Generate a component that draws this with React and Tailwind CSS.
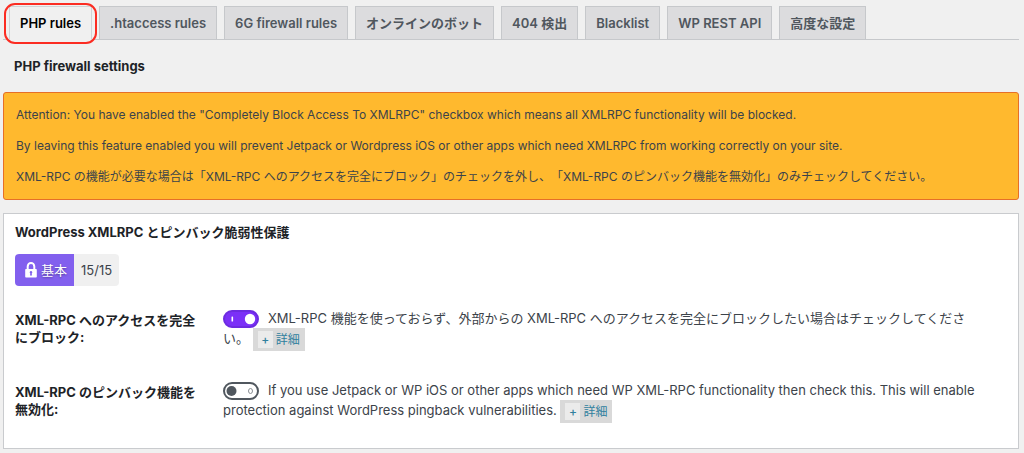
const TABS = [
  'PHP rules',
  '.htaccess rules',
  '6G firewall rules',
  'オンラインのボット',
  '404 検出',
  'Blacklist',
  'WP REST API',
  '高度な設定',
];

function Tab({ label, active }) {
  return (
    <a
      href="#"
      aria-current={active ? 'page' : undefined}
      className={
        'relative -mb-px block whitespace-nowrap border px-[10px] py-[6px] text-[13px] leading-5 font-semibold ' +
        (active
          ? 'border-[#d0d2d5] border-b-[#f0f0f0] bg-[#f0f0f0] text-black'
          : 'border-[#c6c8cb] bg-[#dcdcde] text-[#50575e]')
      }
    >
      {label}
      {active && (
        <span className="pointer-events-none absolute -inset-x-[6px] -top-1 -bottom-[5px] rounded-[11px] border-2 border-[#fb2c22]" />
      )}
    </a>
  );
}

function Toggle({ id, defaultChecked }) {
  return (
    <span className="relative mr-[9px] inline-block h-[18px] w-[36px] align-middle">
      <input
        id={id}
        type="checkbox"
        role="switch"
        defaultChecked={defaultChecked}
        className="peer absolute inset-0 m-0 appearance-none rounded-full border-2 border-[#50575e] bg-white checked:border-[#6c2be0] checked:bg-[#7b30f7]"
      />
      <svg viewBox="0 0 36 18" className="pointer-events-none absolute inset-0 h-full w-full peer-checked:hidden" aria-hidden="true">
        <circle cx="8.5" cy="9" r="5" fill="#50575e" />
        <ellipse cx="27.5" cy="9" rx="2" ry="2.5" fill="none" stroke="#8a8f94" />
      </svg>
      <svg viewBox="0 0 36 18" className="pointer-events-none absolute inset-0 hidden h-full w-full peer-checked:block" aria-hidden="true">
        <circle cx="27" cy="9" r="5.2" fill="#fff" />
        <rect x="8.5" y="6.5" width="1.6" height="5" rx="0.6" fill="#fff" />
      </svg>
    </span>
  );
}

function MoreInfo() {
  return (
    <button
      type="button"
      className="inline-flex h-[23px] items-center gap-[3px] bg-[#d9d9d9] px-[5px] align-middle text-[12px] leading-4 text-[#2f7f9e]"
    >
      <span className="flex h-[17px] w-[15px] items-center justify-center bg-[#ebebeb] font-medium text-[#2f7f9e]">+</span>
      詳細
    </button>
  );
}

function SettingRow({ id, label, checked, children }) {
  return (
    <tr className="align-top">
      <th scope="row" className="w-[208px] pt-[10px] pr-5 pb-7 text-left text-[13px] leading-[17px] font-bold text-[#1d2327]">
        <label htmlFor={id}>{label}</label>
      </th>
      <td className="pt-[6px] pr-[30px] text-[13px] leading-5 text-[#3c434a]">
        <Toggle id={id} defaultChecked={checked} />
        {children} <MoreInfo />
      </td>
    </tr>
  );
}

export default function App() {
  return (
    <div className="min-h-screen bg-[#f0f0f0] pr-[5px] pb-1 pl-[3px] font-['Inter','Noto_Sans_CJK_JP',sans-serif] text-[#3c434a] [text-spacing-trim:space-all]">
      <nav className="flex gap-[7px] border-b border-[#c6c8cb] pt-[6px] pl-[6px]">
        {TABS.map((label, i) => (
          <Tab key={label} label={label} active={i === 0} />
        ))}
      </nav>

      <h2 className="mt-4 ml-[11px] text-[13px] leading-5 font-bold text-[#1d2327]">PHP firewall settings</h2>

      <div className="mt-4 rounded-[3px] border border-[#e66f28] bg-[#ffb92e] px-3 py-[13px] text-[12px] leading-[18px]">
        <p>
          Attention: You have enabled the "Completely Block Access To XMLRPC" checkbox which means all XMLRPC
          functionality will be blocked.
        </p>
        <p className="mt-[13px]">
          By leaving this feature enabled you will prevent Jetpack or Wordpress iOS or other apps which need XMLRPC from
          working correctly on your site.
        </p>
        <p className="mt-[13px]">
          XML-RPC の機能が必要な場合は「XML-RPC へのアクセスを完全にブロック」のチェックを外し、「XML-RPC
          のピンバック機能を無効化」のみチェックしてください。
        </p>
      </div>

      <section className="mt-[13px] border border-[#c9cbce] bg-white px-[11px] pt-2 pb-[2px]">
        <h3 className="text-[13px] leading-5 font-bold text-[#1d2327]">WordPress XMLRPC とピンバック脆弱性保護</h3>

        <div className="mt-3 inline-flex h-8 overflow-hidden rounded-[4px] text-[13px] leading-8">
          <span className="flex items-center gap-1 bg-[#8260ee] pr-[7px] pl-[10px] text-white [text-shadow:0_1px_2px_rgba(0,0,0,0.35)]">
            <svg viewBox="0 0 12 16" className="h-4 w-3" aria-hidden="true">
              <path d="M2.7 7.5V4.4a3.3 3.3 0 0 1 6.6 0v3.1" fill="none" stroke="#fff" strokeWidth="2" />
              <path
                fillRule="evenodd"
                fill="#fff"
                d="M1 7h10a.8.8 0 0 1 .8.8v6.9a.8.8 0 0 1-.8.8H1a.8.8 0 0 1-.8-.8V7.800A.8.8 0 0 1 1 7Zm5 2a1.300 1.300 0 0 0-.7 2.400l-.3 2.100h2l-.3-2.100A1.300 1.300 0 0 0 6 9Z"
              />
            </svg>
            基本
          </span>
          <span className="bg-[#f0f0f0] px-[7px]">15/15</span>
        </div>

        <table className="mt-4 w-full border-collapse">
          <tbody>
            <SettingRow id="block-xmlrpc" label="XML-RPC へのアクセスを完全にブロック:" checked>
              XML-RPC 機能を使っておらず、外部からの XML-RPC へのアクセスを完全にブロックしたい場合はチェックしてください。
            </SettingRow>
            <SettingRow id="disable-pingback" label="XML-RPC のピンバック機能を無効化:">
              If you use Jetpack or WP iOS or other apps which need WP XML-RPC functionality then check this. This will
              enable protection against WordPress pingback vulnerabilities.
            </SettingRow>
          </tbody>
        </table>
      </section>
    </div>
  );
}
